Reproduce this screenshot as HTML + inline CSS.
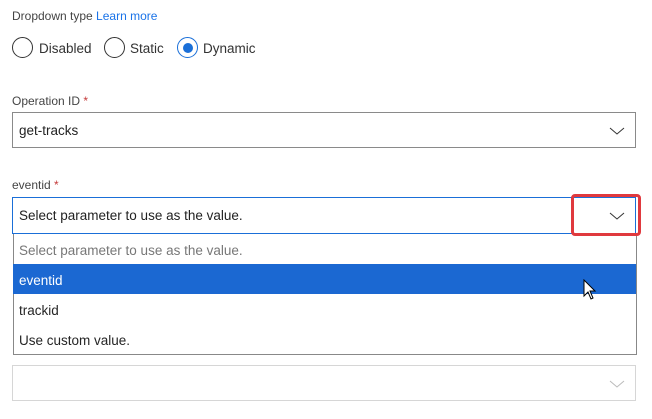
<!DOCTYPE html>
<html><head><style>
body{margin:0;width:652px;height:419px;background:#fff;font-family:"Liberation Sans",sans-serif;position:relative;overflow:hidden;color:#252525}
.a{position:absolute}
.lbl{font-size:12px;color:#444}
.lbl b{color:#c43a3a;font-weight:normal}
.box{position:absolute;left:12px;width:622px;height:34px;border:1px solid #8a8a8a;box-sizing:content-box}
.txt{position:absolute;left:6px;top:10px;font-size:13.5px;color:#222}
.chev{position:absolute;right:10px;top:13px}
.radio{position:absolute;top:37px;width:21px;height:21px;border:1px solid #333;border-radius:50%;box-sizing:border-box}
.rl{position:absolute;top:41px;font-size:13.5px;color:#333}
.item{position:absolute;left:13px;width:623px;height:30px;font-size:13.5px}
.item span{position:absolute;left:6px;top:9px}
</style></head><body>
<div class="a lbl" style="left:12px;top:9px">Dropdown type <span style="color:#1a73e8">Learn more</span></div>
<div class="radio" style="left:12px"></div><div class="rl" style="left:39px">Disabled</div>
<div class="radio" style="left:104px"></div><div class="rl" style="left:130px">Static</div>
<div class="radio" style="left:177px;border-color:#1a6fd8"><div style="position:absolute;left:4.5px;top:4.5px;width:10px;height:10px;border-radius:50%;background:#1a6fd8"></div></div><div class="rl" style="left:203px">Dynamic</div>
<div class="a lbl" style="left:12px;top:94px">Operation ID <b>*</b></div>
<div class="box" style="top:112px"><div class="txt">get-tracks</div><svg class="chev" width="16" height="10"><path d="M1 2 L8 8 L15 2" fill="none" stroke="#333" stroke-width="1"/></svg></div>
<div class="a lbl" style="left:12px;top:178px">eventid <b>*</b></div>
<div class="box" style="top:197px;height:35px;border-color:#1a6fd8"><div class="txt">Select parameter to use as the value.</div><svg class="chev" width="16" height="10"><path d="M1 2 L8 8 L15 2" fill="none" stroke="#333" stroke-width="1"/></svg></div>
<div class="box" style="top:365px;border-color:#d6d6d6;height:34px"><svg class="chev" width="16" height="10"><path d="M1 2 L8 8 L15 2" fill="none" stroke="#bbb" stroke-width="1"/></svg></div>
<div class="a" style="left:13px;top:234px;width:622px;height:120px;border:1px solid #888;border-top:none;background:#fff"></div>
<div class="item" style="top:234px;color:#777"><span>Select parameter to use as the value.</span></div>
<div class="item" style="top:264px;background:#1b68d2;color:#fff"><span>eventid</span></div>
<div class="item" style="top:294px"><span>trackid</span></div>
<div class="item" style="top:324px"><span>Use custom value.</span></div>
<div class="a" style="left:571px;top:194px;width:70px;height:42px;border:3px solid #e0393e;border-radius:4px;box-sizing:border-box"></div>
<svg class="a" style="left:583px;top:279px" width="14" height="22"><path d="M1 1 L1 17 L5 13 L8 20 L10 19 L7 12 L12 12 Z" fill="#fff" stroke="#000" stroke-width="1"/></svg>
</body></html>
